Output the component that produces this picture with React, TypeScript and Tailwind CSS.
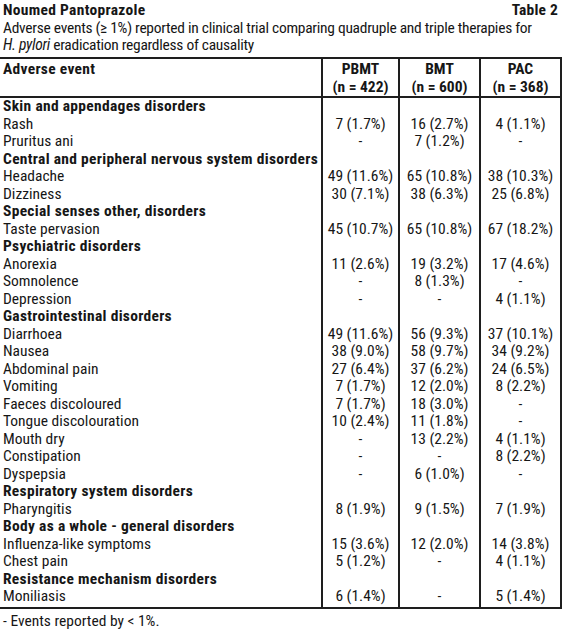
import React from "react";

type Row = { label: string; head?: boolean; v?: [string, string, string] };

const rows: Row[] = [
  { label: "Skin and appendages disorders", head: true },
  { label: "Rash", v: ["7 (1.7%)", "16 (2.7%)", "4 (1.1%)"] },
  { label: "Pruritus ani", v: ["-", "7 (1.2%)", "-"] },
  { label: "Central and peripheral nervous system disorders", head: true },
  { label: "Headache", v: ["49 (11.6%)", "65 (10.8%)", "38 (10.3%)"] },
  { label: "Dizziness", v: ["30 (7.1%)", "38 (6.3%)", "25 (6.8%)"] },
  { label: "Special senses other, disorders", head: true },
  { label: "Taste pervasion", v: ["45 (10.7%)", "65 (10.8%)", "67 (18.2%)"] },
  { label: "Psychiatric disorders", head: true },
  { label: "Anorexia", v: ["11 (2.6%)", "19 (3.2%)", "17 (4.6%)"] },
  { label: "Somnolence", v: ["-", "8 (1.3%)", "-"] },
  { label: "Depression", v: ["-", "-", "4 (1.1%)"] },
  { label: "Gastrointestinal disorders", head: true },
  { label: "Diarrhoea", v: ["49 (11.6%)", "56 (9.3%)", "37 (10.1%)"] },
  { label: "Nausea", v: ["38 (9.0%)", "58 (9.7%)", "34 (9.2%)"] },
  { label: "Abdominal pain", v: ["27 (6.4%)", "37 (6.2%)", "24 (6.5%)"] },
  { label: "Vomiting", v: ["7 (1.7%)", "12 (2.0%)", "8 (2.2%)"] },
  { label: "Faeces discoloured", v: ["7 (1.7%)", "18 (3.0%)", "-"] },
  { label: "Tongue discolouration", v: ["10 (2.4%)", "11 (1.8%)", "-"] },
  { label: "Mouth dry", v: ["-", "13 (2.2%)", "4 (1.1%)"] },
  { label: "Constipation", v: ["-", "-", "8 (2.2%)"] },
  { label: "Dyspepsia", v: ["-", "6 (1.0%)", "-"] },
  { label: "Respiratory system disorders", head: true },
  { label: "Pharyngitis", v: ["8 (1.9%)", "9 (1.5%)", "7 (1.9%)"] },
  { label: "Body as a whole - general disorders", head: true },
  { label: "Influenza-like symptoms", v: ["15 (3.6%)", "12 (2.0%)", "14 (3.8%)"] },
  { label: "Chest pain", v: ["5 (1.2%)", "-", "4 (1.1%)"] },
  { label: "Resistance mechanism disorders", head: true },
  { label: "Moniliasis", v: ["6 (1.4%)", "-", "5 (1.4%)"] },
];

const line = "border-[#1e1e1e]";

export default function App() {
  return (
    <div className="w-[562px] h-[636px] overflow-hidden bg-white text-[#161616] text-[15.5px] leading-[17.5px] font-['Roboto',sans-serif] [font-stretch:condensed]">
      <div className="flex justify-between pl-[3px] pr-[4px] pt-[2px] font-bold">
        <span className="tracking-[0.3px]">Noumed Pantoprazole</span>
        <span className="tracking-[0.2px]">Table 2</span>
      </div>
      <div className="pl-[3px] tracking-[-0.28px]">
        <div>Adverse events (≥ 1%) reported in clinical trial comparing quadruple and triple therapies for</div>
        <div>
          <i>H. pylori</i> eradication regardless of causality
        </div>
      </div>
      <div className={`mt-[2.5px] border-t-2 border-b-2 ${line} grid grid-cols-[321px_77px_81px_83px] font-bold`}>
        <div className="pl-[3px] pt-[2px] tracking-[0.3px]">Adverse event</div>
        <div className={`border-l-2 ${line} pt-[2px] text-center`}>
          <div>PBMT</div>
          <div>(n = 422)</div>
        </div>
        <div className={`border-l-2 ${line} pt-[2px] text-center`}>
          <div>BMT</div>
          <div>(n = 600)</div>
        </div>
        <div className={`border-l-2 border-r-2 ${line} pt-[2px] text-center`}>
          <div>PAC</div>
          <div>(n = 368)</div>
        </div>
      </div>
      <div className={`border-b-2 ${line} grid grid-cols-[321px_77px_81px_83px]`}>
        <div className="pl-[3px] pb-[1.5px]">
          {rows.map((r, i) => (
            <div key={i} className={`whitespace-nowrap ${r.head ? "font-bold tracking-[0.3px]" : ""}`}>
              {r.label}
            </div>
          ))}
        </div>
        {[0, 1, 2].map((c) => (
          <div key={c} className={`border-l-2 ${c === 2 ? "border-r-2" : ""} ${line} text-center pb-[1.5px]`}>
            {rows.map((r, i) => (
              <div key={i} className="whitespace-nowrap h-[17.5px]">
                {r.v ? r.v[c] : ""}
              </div>
            ))}
          </div>
        ))}
      </div>
      <div className="pl-[3px] pt-[4px]">- Events reported by &lt; 1%.</div>
    </div>
  );
}
